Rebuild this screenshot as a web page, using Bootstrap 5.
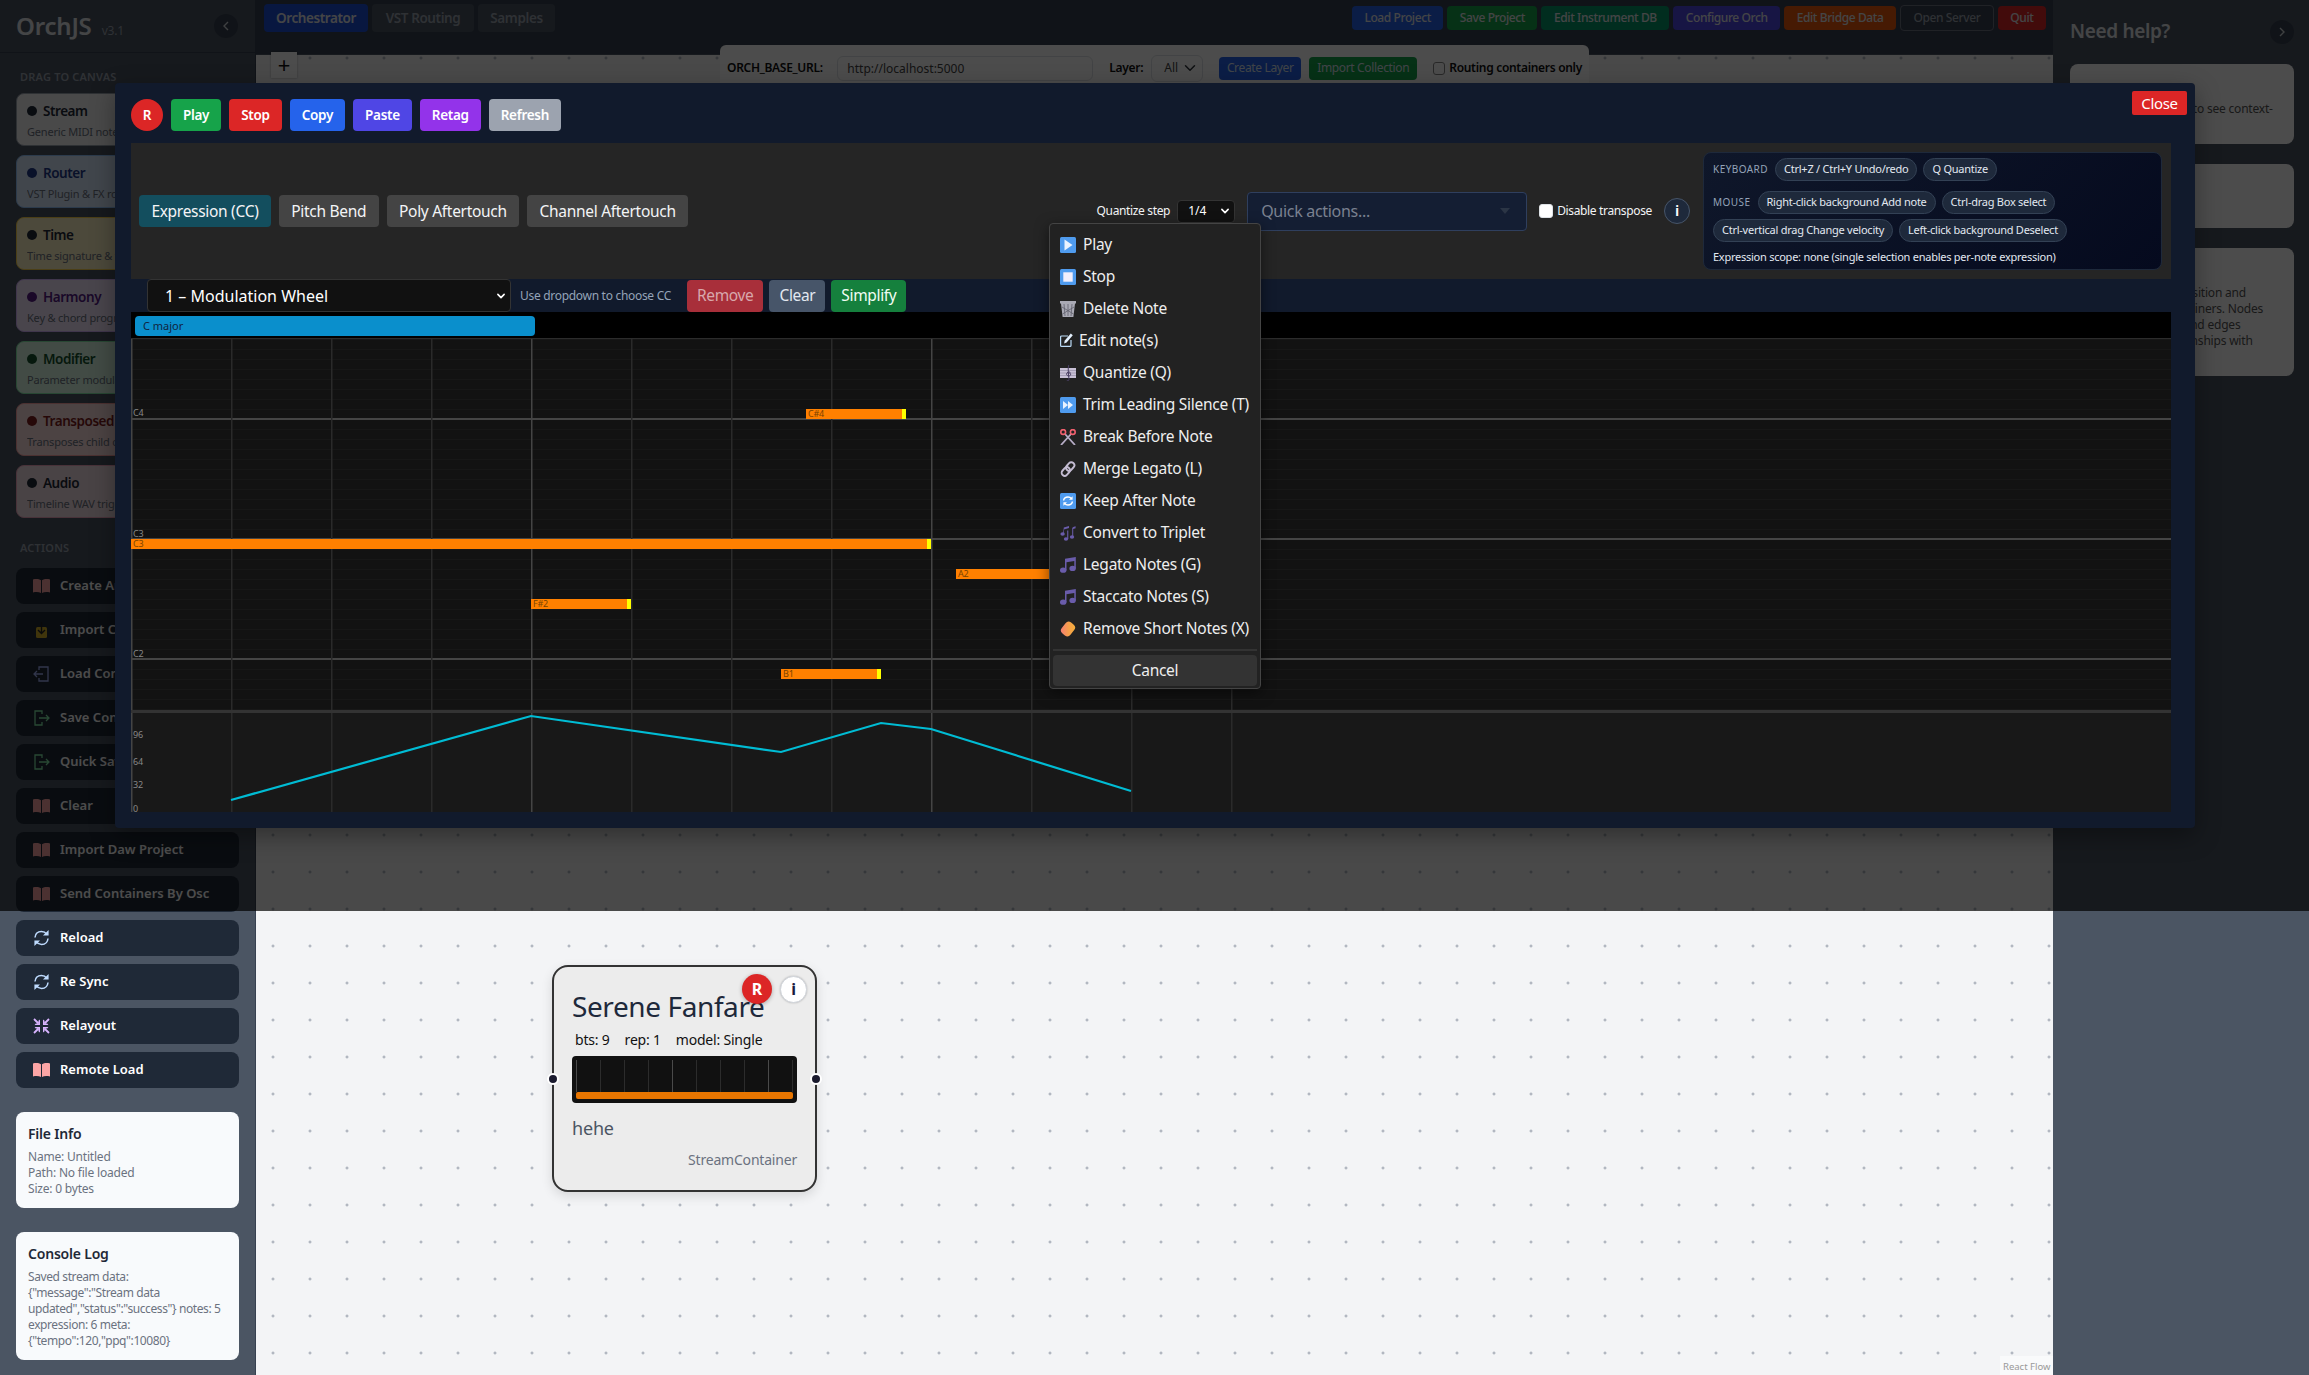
<!DOCTYPE html>
<html lang="en">
<head>
<meta charset="UTF-8">
<meta name="viewport" content="width=device-width, initial-scale=1.0">
<title>OrchJS</title>
<link rel="stylesheet" href="https://cdn.jsdelivr.net/npm/bootstrap@5.3.0/dist/css/bootstrap.min.css">
<style>
html, body { height: 100%; }
body { margin: 0; background: #4b5563; font-family: "Noto Sans", "Liberation Sans", sans-serif; overflow: hidden; letter-spacing: -.2px; }
#app { width: 2309px; height: 1375px; }
.main-col { min-width: 0; }

/* left sidebar */
.side-left { width: 256px; background: #4b5563; border-right: 1px solid #374151; }
.side-head { height: 53px; padding: 0 17px 0 16px; border-bottom: 1px solid #374151; }
.brand { font-size: 24px; font-weight: 600; color: #e5e7eb; line-height: 1; }
.brand small { font-size: 12px; font-weight: 400; color: #9ca3af; margin-left: 4px; }
.round-toggle { width: 24px; height: 24px; border-radius: 50%; background: #374151; }
.side-label { font-size: 11px; font-weight: 600; color: #9ca3af; letter-spacing: .2px; margin: 0 0 0 20px; line-height: 16px; }
.side-label.gap-top { margin-top: 22px; }
.side-body { padding: 8px 16px 0; }
.side-body.acts { padding-top: 12px; }
.pal-item { height: 53px; border-radius: 8px; border: 1px solid; margin-bottom: 9px; padding: 7px 10px; line-height: 1; }
.pal-name { font-size: 13.5px; font-weight: 600; line-height: 20px; display: flex; align-items: center; gap: 6px; letter-spacing: -.45px; }
.pal-name i { width: 10px; height: 10px; border-radius: 50%; background: currentColor; margin-right: 0; }
.pal-desc { font-size: 11px; color: #6b7280; line-height: 16px; white-space: nowrap; margin-top: 3px; overflow: hidden; }
.act-btn { width: 223px; height: 36px; border-radius: 8px; background: #1f2937; color: #fff; font-size: 13px; font-weight: 600; border: 0; padding: 0 0 0 17px; gap: 10px; margin-bottom: 8px; white-space: nowrap; }
.act-btn:hover { background: #1f2937; color: #fff; }
.act-btn svg { width: 17px; height: 16px; flex: none; }
.info-box { width: 223px; background: #f8fafc; border: 0; border-radius: 8px; padding: 12px 12px 10px; margin-left: 16px; }
.info-box.file-box { height: 96px; margin-top: 24px; }
.info-box.log-box { height: 128px; margin-top: 24px; }
.info-box h6 { font-size: 14px; font-weight: 600; color: #1f2937; margin: 0 0 5px; line-height: 20px; }
.info-box p { font-size: 12px; line-height: 16px; color: #6b7280; margin: 0; white-space: nowrap; }
.log-box p { letter-spacing: -.4px; }

/* top bar */
.top-bar { height: 55px; background: #374151; padding: 4px 7px 0 8px; border-bottom: 1px solid #4b5563; }
.tab-btn { height: 28px; padding: 0; border: 0; border-radius: 4px; font-size: 13.5px; font-weight: 600; background: #4b5563; color: #9ca3af; letter-spacing: -.4px; white-space: nowrap; }
.tab-btn.on { background: #1d4ed8; color: #e5e7eb; }
.tab-a { width: 104px; } .tab-b { width: 102px; } .tab-c { width: 77px; }
.mini-btn { height: 24px; padding: 0 12.5px; border: 0; border-radius: 4px; font-size: 12px; font-weight: 500; color: #e5e7eb; line-height: 1; margin-top: 2px; white-space: nowrap; letter-spacing: -.4px; }
.c-blue { background: #2563eb; } .c-green { background: #16a34a; } .c-emerald { background: #059669; }
.c-indigo { background: #4f46e5; } .c-orange { background: #ea580c; } .c-red { background: #dc2626; }
.c-dark { background: #374151; border: 1px solid #6b7280; color: #9ca3af; height: 26px; margin-top: 1px; }

/* canvas */
.flow-canvas { position: relative; background-color: #f3f4f6; background-image: radial-gradient(circle, #9ca3af 1.1px, transparent 1.4px); background-size: 37px 37px; background-position: -1.5px -15.5px; }
.zoom-ctl { position: absolute; left: 15px; top: -3px; width: 26px; height: 26px; background: #fff; color: #111; font-size: 22px; line-height: 24px; text-align: center; box-shadow: 0 0 2px rgba(0,0,0,.3); }
.canvas-tools { position: absolute; left: 464px; top: -10px; width: 869px; height: 46px; background: #fff; border-radius: 6px; padding: 0 7px; font-size: 12px; color: #111; white-space: nowrap; }
.canvas-tools b { font-weight: 600; letter-spacing: -.3px; }
.canvas-tools .form-control { width: 256px; height: 25px; flex: none; font-size: 12px; padding: 0 9px; margin: 0 16px 0 auto; border-radius: 6px; min-height: 0; color: #444; }
.canvas-tools .form-select { width: 52px; height: 27px; flex: none; font-size: 12px; padding: 0 4px 0 12px; margin: 0 16px 0 8px; background-position: right 4px center; min-height: 0; color: #444; }
.canvas-tools .tool-btn { height: 23px; flex: none; padding: 0 8px; font-size: 12px; border: 0; border-radius: 4px; color: #dbe4f0; margin-right: 8px; letter-spacing: -.35px; }
.canvas-tools .tool-btn.wide-lbl { width: 108px; padding: 0; }
.canvas-tools .tool-btn.nar-lbl { width: 82px; padding: 0; }
.canvas-tools .url-lbl { width: 107px; }
.canvas-tools .form-check-input { margin: 0 4px 0 8px; width: 12px; height: 13px; border-color: #888; flex: none; }
.attribution { position: absolute; right: 0; bottom: 0; font-size: 9.5px; padding: 2px 1px 0 3px; line-height: 17px; height: 19px; width: 53px; white-space: nowrap; color: #999; background: rgba(255,255,255,.5); letter-spacing: 0; }

/* node */
.stream-node { position: absolute; left: 296px; top: 910px; width: 265px; height: 227px; background: #ececec; border: 2px solid #333; border-radius: 16px; box-shadow: 0 4px 12px rgba(0,0,0,.12); padding: 21px 18px 0; }
.node-title { font-size: 28px; line-height: 36px; color: #1e293b; white-space: nowrap; letter-spacing: -.4px; }
.node-meta { font-size: 14px; color: #111; margin: 6px 0 7px 3px; gap: 15px; line-height: 19px; }
.node-prev { position: relative; width: 225px; height: 47px; background: #111; border-radius: 4px; overflow: hidden; }
.node-prev span { position: absolute; top: 4px; height: 32px; width: 1px; background: #2c2c2c; }
.node-prev span.hi { background: #4a4a4a; }
.node-prev em { position: absolute; left: 4px; right: 4px; top: 36px; height: 7px; border-radius: 2px; background: #e87500; }
.node-note { font-size: 18px; color: #4b5563; line-height: 26px; margin-top: 12px; }
.node-type { font-size: 14px; color: #6b7280; text-align: right; margin-top: 9px; line-height: 20px; width: 225px; }
.node-r { position: absolute; left: 188px; top: 7px; width: 30px; height: 30px; border-radius: 50%; background: #dc2626; color: #fff; font-weight: 700; font-size: 16px; text-align: center; line-height: 30px; box-shadow: 0 1px 4px rgba(0,0,0,.3); }
.node-i { position: absolute; left: 226px; top: 9px; width: 27px; height: 27px; border-radius: 50%; background: #fff; border: 1px solid #d1d5db; box-shadow: 0 0 2px rgba(0,0,0,.25); color: #1a1a3e; font-weight: 700; font-size: 16px; text-align: center; line-height: 25px; }
.node-hd { position: absolute; top: 106px; width: 12px; height: 12px; border-radius: 50%; background: #1a1a2e; border: 2px solid #fff; }
.node-hd.hd-l { left: -7px; }
.node-hd.hd-r { right: -7px; }

/* right panel */
.side-right { width: 256px; background: #4b5563; padding: 0 15px 0 16px; border-left: 1px solid #4b5563; }
.help-head { height: 64px; color: #e5e7eb; }
.help-head h5 { font-size: 19px; font-weight: 600; margin: -2px 0 0; color: #e5e7eb; letter-spacing: -.35px; }
.help-box { background: #fff; border: 0; border-radius: 8px; padding: 16px 16px 0 16px; margin-bottom: 20px; font-size: 12px; line-height: 16px; color: #555; white-space: nowrap; }
.help-box h6 { font-size: 14px; font-weight: 600; line-height: 17px; color: #1f2937; margin: 0 0 4px; }
.help-box.box-a { height: 80px; }
.help-box.box-b { height: 64px; }
.help-box.box-c { height: 128px; padding-top: 37px; }

/* overlay and editor */
.dim-layer { position: absolute; left: 0; top: 0; width: 2309px; height: 911px; background: rgba(0,0,0,.7); z-index: 10; }
.editor { position: absolute; left: 115px; top: 83px; width: 2080px; height: 745px; background: #111a2c; border-radius: 4px; padding: 16px 24px 16px 16px; color: #fff; box-shadow: 0 8px 24px rgba(0,0,0,.35); }
.ed-btn { height: 32px; padding: 0 12px; border: 0; border-radius: 4px; color: #fff; font-size: 13.5px; font-weight: 600; letter-spacing: -.3px; }
.ed-btn:hover { color: #fff; }
.ed-rec { width: 32px; border-radius: 50%; padding: 0; background: #dc2626; }
.c-purple { background: #9333ea; } .c-gray { background: #9ca3af; } .c-violet { background: #4f46e5; }
.ed-close { position: absolute; left: 2017px; top: 8px; width: 55px; height: 24px; padding: 0; background: #dc2626; border: 0; border-radius: 2px; color: #fff; font-size: 15px; letter-spacing: -.3px; line-height: 1; }
.ed-tools { margin-top: 12px; height: 136px; background: #252525; padding: 0 9px 0 8px; }
.cc-tab { height: 32px; padding: 2px 12.4px 0; border: 0; border-radius: 4px; background: #444; color: #f3f4f6; font-size: 15.5px; font-weight: 400; line-height: 1; letter-spacing: -.3px; white-space: nowrap; }
.cc-tab.on { background: #134e5e; }
.small-lbl { font-size: 12px; color: #f3f4f6; white-space: nowrap; letter-spacing: -.35px; }
.dark-sel { background-color: #111; border: 1px solid #333; color: #fff; border-radius: 4px; background-image: url("data:image/svg+xml,%3csvg xmlns='http://www.w3.org/2000/svg' viewBox='0 0 16 16'%3e%3cpath fill='none' stroke='%23fff' stroke-linecap='round' stroke-linejoin='round' stroke-width='2.6' d='m3 5.5 5 5 5-5'/%3e%3c/svg%3e"); background-size: 10px 10px; background-position: right 4px center; }
.q-sel { width: 58px; height: 23px; font-size: 12px; padding: 0 0 0 10px; margin-left: 7px; min-height: 0; }
.quick-act { width: 280px; height: 39px; margin-left: 12px; background: #141e33; border: 1px solid #2f3f5e; border-radius: 4px; color: #7a8190; font-size: 16px; padding: 0 13px; letter-spacing: -.3px; }
.quick-act u { width: 0; height: 0; border: 5px solid transparent; border-top: 6px solid #2b3545; margin-top: 5px; margin-right: 3px; }
.ed-tools .form-check-input { width: 14px; height: 14px; margin: 0 4px 0 12px; border-radius: 3px; }
.i-badge { width: 26px; height: 26px; border-radius: 50%; background: #1e293b; border: 1px solid #475569; text-align: center; color: #fff; font-weight: 600; font-size: 15px; line-height: 23px; margin: 0 13px 0 12px; }
.key-help { width: 459px; height: 118px; border-radius: 8px; background: linear-gradient(135deg, #0f172a, #050a1e); border: 1px solid #1e293b; padding: 5px 10px 0 9px; font-size: 11px; color: #e2e8f0; letter-spacing: -.25px; }
.key-row { gap: 6px; align-items: center; }
.key-row.row-kbd { margin-bottom: 10px; }
.key-row.row-mouse { margin-bottom: 5px; }
.key-row > b { font-weight: 400; color: #94a3b8; letter-spacing: .45px; font-size: 10px; margin-right: 1px; }
.key-pill { height: 23px; border-radius: 12px; background: #1e293b; border: 1px solid #334155; padding: 0 8px; line-height: 20px; white-space: nowrap; }
.scope-line { margin-top: 7px; }
.cc-row { height: 33px; padding-left: 16px; }
.cc-sel { width: 364px; height: 33px; padding: 0 26px 0 17px; font-size: 16px; margin-right: 9px; }
.cc-hint { font-size: 12px; color: #94a3b8; margin-right: 16px; white-space: nowrap; letter-spacing: -.3px; }
.cc-act { height: 32px; margin-top: 1px; padding: 0 10px; border: 0; border-radius: 4px; font-size: 15.5px; margin-right: 6px; letter-spacing: -.35px; }
.act-remove { background: #a82f3a; color: #d8a8ac; }
.act-clear { background: #475569; color: #e2e8f0; }
.act-simplify { background: #15803d; color: #f0fdf4; }
.chord-lane { height: 27px; background: #000; padding: 4px 4px 3px; border-bottom: 1px solid #2c2c2c; }
.chord-pill { width: 400px; height: 20px; border-radius: 4px; background: #0a8fcc; color: #10243f; font-size: 11px; padding-left: 8px; line-height: 20px; letter-spacing: 0; }
.roll-svg { display: block; background: #121212; }
.lane-svg { display: block; background: #181818; }
.roll-svg text, .lane-svg text { font-family: "Noto Sans", sans-serif; font-size: 9px; }

/* note context menu */
.ctx-menu { position: absolute; left: 934px; top: 140px; width: 212px; height: 466px; background: #222; border: 1px solid #444; border-radius: 4px; padding: 5px 0 0; box-shadow: 0 4px 14px rgba(0,0,0,.5); }
.ctx-item { height: 32px; background: transparent; border: 0; padding: 0 0 0 10px; color: #eee; font-size: 15.5px; gap: 7px; white-space: nowrap; letter-spacing: -.25px; border-radius: 0; }
.ctx-item svg { width: 16px; height: 16px; flex: none; }
.ctx-item.slim { gap: 6px; }
.ctx-item.slim svg { width: 13px; height: 14px; margin-top: -3px; }
.ctx-rule { height: 2px; background: #333; margin: 4px 3px 4px; }
.ctx-cancel { display: block; width: 204px; height: 31px; margin: 0 3px; background: #333; color: #eee; border: 0; border-radius: 4px; font-size: 15.5px; line-height: 1; letter-spacing: -.3px; }
</style>
</head>
<body>
<svg width="0" height="0" class="position-absolute">
  <defs>
    <symbol id="ic-book" viewBox="0 0 17 16"><path fill="#fca5a5" d="M0 1.5C3 .6 6 1 8 2.2V15C6 14 3 13.8 0 14.6ZM17 1.5C14 .6 11 1 9 2.2V15C11 14 14 13.8 17 14.6Z"/></symbol>
    <symbol id="ic-sync" viewBox="0 0 17 16"><g fill="none" stroke="#bfdbfe" stroke-width="1.5"><path d="M2 7.5C2.4 3.5 5 1.6 8.4 1.6c2.4 0 4.2 1 5.4 2.6"/><path d="M15 8.5c-.4 4-3 5.9-6.4 5.9-2.4 0-4.2-1-5.4-2.6"/></g><path fill="#bfdbfe" d="M15.6 0v5.6H10zM1.4 16v-5.6H7z"/></symbol>
    <symbol id="ic-shrink" viewBox="0 0 17 16"><g fill="none" stroke="#d8b4fe" stroke-width="1.8"><path d="M1 1l4.5 4.5M16 1l-4.5 4.5M1 15l4.5-4.5M16 15l-4.5-4.5"/></g><path fill="#d8b4fe" d="M7 7H1.6l1.2-1.6h2.6V2.8L7 1.6zM10 7h5.4l-1.2-1.6h-2.6V2.8L10 1.6zM7 9H1.6l1.2 1.6h2.6v2.6L7 14.4zM10 9h5.4l-1.2 1.6h-2.6v2.6L10 14.4z"/></symbol>
    <symbol id="ic-import" viewBox="0 0 17 16"><rect x="3" y="5" width="11" height="11" rx="1.5" fill="#d6b32a"/><path d="M8.5 0v11M5 8l3.5 3.5L12 8" fill="none" stroke="#222" stroke-width="1.4"/></symbol>
    <symbol id="ic-load" viewBox="0 0 17 16"><path d="M6 4V1h9v14H6v-3M1 8h9M4 5 1 8l3 3" fill="none" stroke="#a5b4fc" stroke-width="1.3"/></symbol>
    <symbol id="ic-save" viewBox="0 0 17 16"><path d="M9 4V1H2v14h7v-3M6 8h10M13 5l3 3-3 3" fill="none" stroke="#86efac" stroke-width="1.3"/></symbol>

    <symbol id="em-play" viewBox="0 0 16 16"><rect width="16" height="16" rx="1.5" fill="#4f9bee"/><path fill="#eaf3ff" d="M4.5 2.5 12.5 8l-8 5.5z"/></symbol>
    <symbol id="em-stop" viewBox="0 0 16 16"><rect width="16" height="16" rx="1.5" fill="#4f9bee"/><rect x="3.3" y="3.3" width="9.4" height="9.4" fill="#f1eefc"/></symbol>
    <symbol id="em-trash" viewBox="0 0 16 16"><path fill="#a9a9b4" d="M0 0h16v2.4H0zM1 2.4h14L13.4 16H2.6z"/><path stroke="#5f5f6c" stroke-width=".8" fill="none" d="M4 3l1 12M8 3v12M12 3l-1 12M2 6l11.5 7M14 6 2.5 13"/></symbol>
    <symbol id="em-edit" viewBox="0 0 13 14"><path d="M8 3H1.6a1 1 0 0 0-1 1v8.400a1 1 0 0 0 1 1h8.400a1 1 0 0 0 1-1V7" fill="none" stroke="#bcdcf8" stroke-width="1.200"/><path d="M4.600 7.800 10.800.6 12.800 2.300 6.600 9.600 4.200 10.400z" fill="#e4f1ff"/></symbol>
    <symbol id="em-score" viewBox="0 0 16 16"><rect y="3" width="16" height="10" fill="#c9c1d6"/><path d="M0 5.500h16M0 8h16M0 10.500h16" stroke="#8d86a0" stroke-width=".6"/><path d="M8.700 0c-1 3-.2 11 .3 14 .2 2-2 2.200-2.200.8M10.400 7.500c-1.400-1.200-3.800-.2-3.800 1.700s3.400 2.500 4 .6-2-2.200-2.600-1" fill="none" stroke="#4a3f63" stroke-width="1"/></symbol>
    <symbol id="em-ff" viewBox="0 0 16 16"><rect width="16" height="16" rx="1.500" fill="#4f9bee"/><path fill="#eaf3ff" d="M3 4l5 4-5 4zM8 4l5 4-5 4z"/></symbol>
    <symbol id="em-scissors" viewBox="0 0 16 16"><path d="M1 16 11 5M15 16 5 5" stroke="#b6acc6" stroke-width="1.800"/><g fill="none" stroke="#f0606e" stroke-width="1.600"><circle cx="3.200" cy="3" r="2.400"/><circle cx="12.800" cy="3" r="2.400"/></g></symbol>
    <symbol id="em-link" viewBox="0 0 16 16"><g fill="none" stroke="#c4bcd2" stroke-width="1.900"><rect x="7.200" y=".8" width="6" height="9.400" rx="3" transform="rotate(42 10.200 5.500)"/><rect x="2.800" y="5.800" width="6" height="9.400" rx="3" transform="rotate(42 5.800 10.500)"/></g></symbol>
    <symbol id="em-keep" viewBox="0 0 16 16"><rect width="16" height="16" rx="1.500" fill="#4f9bee"/><g fill="none" stroke="#fff" stroke-width="1.300"><path d="M3.500 7.500C4 5 6 4 8 4c1.500 0 2.600.5 3.400 1.500"/><path d="M12.500 8.500C12 11 10 12 8 12c-1.500 0-2.600-.5-3.400-1.500"/></g><path fill="#fff" d="M12.600 3.200v3.600H9zM3.400 12.800V9.200H7z"/></symbol>
    <symbol id="em-notes3" viewBox="0 0 16 16"><g fill="#6a5cab"><ellipse cx="2.600" cy="9" rx="2.200" ry="1.800"/><ellipse cx="6" cy="14" rx="2.200" ry="1.800"/><ellipse cx="12" cy="12" rx="2.200" ry="1.800"/><path d="M3.800 2.500 9 1v2l-5 1.600V9h-.9zM7.200 5.500h1.100V14h-1.100zM13.200 2l2.400-.8v2l-2.400.8V12h-1V3z"/></g></symbol>
    <symbol id="em-notes" viewBox="0 0 16 16"><g fill="#6a5cab"><ellipse cx="3.200" cy="13.200" rx="3.200" ry="2.600"/><ellipse cx="12.600" cy="11.400" rx="3.200" ry="2.600"/><path d="M5 1.800 15.800 0v11.400h-1.500V4L6.500 5.300v8H5z"/></g></symbol>
    <symbol id="em-eraser" viewBox="0 0 16 16"><linearGradient id="gr-er" x1="0" y1="1" x2="1" y2="0"><stop offset="0" stop-color="#f57a7a"/><stop offset=".55" stop-color="#f6a04a"/><stop offset="1" stop-color="#f3b13a"/></linearGradient><rect x="2.500" y="1" width="11" height="14" rx="4" transform="rotate(38 8 8)" fill="url(#gr-er)"/></symbol>
  </defs>
</svg>

<div id="app" class="position-relative d-flex">
  <aside class="side-left flex-shrink-0">
    <div class="side-head d-flex align-items-center justify-content-between">
      <div class="brand">OrchJS <small>v3.1</small></div>
      <div class="round-toggle d-flex align-items-center justify-content-center"><svg width="8" height="12" viewBox="0 0 8 12"><path d="M6 2 2 6l4 4" fill="none" stroke="#d1d5db" stroke-width="1.4"/></svg></div>
    </div>
    <div class="pt-3">
      <p class="side-label">DRAG TO CANVAS</p>
    </div>
    <div class="side-body" id="palette"></div>
    <p class="side-label gap-top">ACTIONS</p>
    <div class="side-body acts" id="actions"></div>
    <div class="info-box card file-box">
      <h6>File Info</h6>
      <p>Name: Untitled<br>Path: No file loaded<br>Size: 0 bytes</p>
    </div>
    <div class="info-box card log-box">
      <h6>Console Log</h6>
      <p>Saved stream data:<br>{"message":"Stream data<br>updated","status":"success"} notes: 5<br>expression: 6 meta:<br>{"tempo":120,"ppq":10080}</p>
    </div>
  </aside>

  <main class="main-col d-flex flex-column flex-grow-1">
    <div class="top-bar d-flex flex-shrink-0">
      <div class="d-flex gap-1">
        <button class="btn tab-btn tab-a on">Orchestrator</button>
        <button class="btn tab-btn tab-b">VST Routing</button>
        <button class="btn tab-btn tab-c">Samples</button>
      </div>
      <div class="d-flex gap-1 ms-auto">
        <button class="btn mini-btn c-blue">Load Project</button>
        <button class="btn mini-btn c-green">Save Project</button>
        <button class="btn mini-btn c-emerald">Edit Instrument DB</button>
        <button class="btn mini-btn c-indigo">Configure Orch</button>
        <button class="btn mini-btn c-orange">Edit Bridge Data</button>
        <button class="btn mini-btn c-dark">Open Server</button>
        <button class="btn mini-btn c-red">Quit</button>
      </div>
    </div>
    <div class="flow-canvas flex-grow-1">
      <div class="zoom-ctl">+</div>
      <div class="canvas-tools d-flex align-items-center">
        <b class="url-lbl">ORCH_BASE_URL:</b>
        <input class="form-control" value="http://localhost:5000">
        <b>Layer:</b>
        <select class="form-select"><option>All</option></select>
        <button class="btn tool-btn nar-lbl c-blue">Create Layer</button>
        <button class="btn tool-btn wide-lbl c-green">Import Collection</button>
        <input class="form-check-input" type="checkbox">
        <b>Routing containers only</b>
      </div>

      <div class="stream-node">
        <div class="node-title">Serene Fanfare</div>
        <div class="node-meta d-flex"><span>bts: 9</span><span>rep: 1</span><span>model: Single</span></div>
        <div class="node-prev" id="nodePrev"><em></em></div>
        <div class="node-note">hehe</div>
        <div class="node-type">StreamContainer</div>
        <div class="node-r">R</div>
        <div class="node-i">i</div>
        <div class="node-hd hd-l"></div>
        <div class="node-hd hd-r"></div>
      </div>
      <div class="attribution">React Flow</div>
    </div>
  </main>

  <aside class="side-right flex-shrink-0">
    <div class="help-head d-flex align-items-center justify-content-between">
      <h5>Need help?</h5>
      <div class="round-toggle d-flex align-items-center justify-content-center"><svg width="8" height="12" viewBox="0 0 8 12"><path d="m2 2 4 4-4 4" fill="none" stroke="#d1d5db" stroke-width="1.4"/></svg></div>
    </div>
    <div class="help-box card box-a"><h6>Helpful Info</h6><div>Hover over an item to see context-</div></div>
    <div class="help-box card box-b"></div>
    <div class="help-box card box-c">
      <div>Manage the composition and</div><div>organize your containers. Nodes</div><div>represent objects and edges</div><div>describe the relationships with</div>
    </div>
  </aside>

  <div class="dim-layer">
    <div class="editor">
      <div class="d-flex gap-2">
        <button class="btn ed-btn ed-rec">R</button>
        <button class="btn ed-btn c-green">Play</button>
        <button class="btn ed-btn c-red">Stop</button>
        <button class="btn ed-btn c-blue">Copy</button>
        <button class="btn ed-btn c-violet">Paste</button>
        <button class="btn ed-btn c-purple">Retag</button>
        <button class="btn ed-btn c-gray">Refresh</button>
      </div>
      <button class="btn ed-close">Close</button>

      <div class="ed-tools d-flex align-items-center justify-content-between">
        <div class="d-flex gap-2">
          <button class="btn cc-tab on">Expression (CC)</button>
          <button class="btn cc-tab">Pitch Bend</button>
          <button class="btn cc-tab">Poly Aftertouch</button>
          <button class="btn cc-tab">Channel Aftertouch</button>
        </div>
        <div class="d-flex align-items-center">
          <span class="small-lbl">Quantize step</span>
          <select class="form-select dark-sel q-sel"><option>1/4</option></select>
          <div class="quick-act d-flex align-items-center justify-content-between"><span>Quick actions...</span><u></u></div>
          <input class="form-check-input" type="checkbox">
          <span class="small-lbl">Disable transpose</span>
          <div class="i-badge">i</div>
          <div class="key-help">
            <div class="key-row row-kbd d-flex"><b>KEYBOARD</b><span class="key-pill">Ctrl+Z / Ctrl+Y Undo/redo</span><span class="key-pill">Q Quantize</span></div>
            <div class="key-row row-mouse d-flex"><b>MOUSE</b><span class="key-pill">Right-click background Add note</span><span class="key-pill">Ctrl-drag Box select</span></div>
            <div class="key-row d-flex"><span class="key-pill">Ctrl-vertical drag Change velocity</span><span class="key-pill">Left-click background Deselect</span></div>
            <div class="scope-line">Expression scope: none (single selection enables per-note expression)</div>
          </div>
        </div>
      </div>

      <div class="cc-row d-flex">
        <select class="form-select dark-sel cc-sel"><option>1 – Modulation Wheel</option></select>
        <span class="cc-hint align-self-center">Use dropdown to choose CC</span>
        <button class="btn cc-act act-remove">Remove</button>
        <button class="btn cc-act act-clear">Clear</button>
        <button class="btn cc-act act-simplify">Simplify</button>
      </div>

      <div class="chord-lane"><div class="chord-pill">C major</div></div>
      <svg class="roll-svg" id="roll" width="2040" height="372"></svg>
      <svg class="lane-svg" id="lane" width="2040" height="101"></svg>

      <div class="ctx-menu">
        <div class="list-group" id="ctxList"></div>
        <div class="ctx-rule"></div>
        <button class="btn ctx-cancel">Cancel</button>
      </div>
    </div>
  </div>
</div>

<script src="https://cdn.jsdelivr.net/npm/bootstrap@5.3.0/dist/js/bootstrap.bundle.min.js"></script>
<script>
    const NS = "http://www.w3.org/2000/svg";

    // Sidebar palette
    const paletteItems = [
        ["Stream", "Generic MIDI notes", "#f3f4f6", "#9ca3af", "#1f2937"],
        ["Router", "VST Plugin & FX routing", "#dbeafe", "#93c5fd", "#1e3a8a"],
        ["Time", "Time signature & tempo", "#fef3c7", "#fcd34d", "#1f2937"],
        ["Harmony", "Key & chord progression", "#f3e8ff", "#d8b4fe", "#581c87"],
        ["Modifier", "Parameter modulation", "#dcfce7", "#86efac", "#14532d"],
        ["Transposed", "Transposes child containers", "#fee2e2", "#fca5a5", "#7f1d1d"],
        ["Audio", "Timeline WAV triggers", "#f5e1e6", "#f0a8c0", "#1f2937"]
    ];
    document.getElementById("palette").innerHTML = paletteItems.map(p =>
        `<div class="pal-item" style="background:${p[2]};border-color:${p[3]};color:${p[4]}">
            <div class="pal-name"><i></i>${p[0]}</div>
            <div class="pal-desc">${p[1]}</div>
        </div>`).join("");

    // Sidebar actions
    const actionItems = [
        ["ic-book", "Create Arrangement"], ["ic-import", "Import Collection"], ["ic-load", "Load Config"],
        ["ic-save", "Save Config"], ["ic-save", "Quick Save"], ["ic-book", "Clear"],
        ["ic-book", "Import Daw Project"], ["ic-book", "Send Containers By Osc"],
        ["ic-sync", "Reload"], ["ic-sync", "Re Sync"], ["ic-shrink", "Relayout"], ["ic-book", "Remote Load"]
    ];
    document.getElementById("actions").innerHTML = actionItems.map(a =>
        `<button class="btn act-btn d-flex align-items-center"><svg><use href="#${a[0]}"/></svg>${a[1]}</button>`).join("");

    // Context menu
    const menuItems = [
        ["em-play", "Play"], ["em-stop", "Stop"], ["em-trash", "Delete Note"], ["em-edit", "Edit note(s)", 1],
        ["em-score", "Quantize (Q)"], ["em-ff", "Trim Leading Silence (T)"], ["em-scissors", "Break Before Note"],
        ["em-link", "Merge Legato (L)"], ["em-keep", "Keep After Note"], ["em-notes3", "Convert to Triplet"],
        ["em-notes", "Legato Notes (G)"], ["em-notes", "Staccato Notes (S)"], ["em-eraser", "Remove Short Notes (X)"]
    ];
    document.getElementById("ctxList").innerHTML = menuItems.map(m =>
        `<div class="ctx-item d-flex align-items-center${m[2] ? " slim" : ""}"><svg><use href="#${m[0]}"/></svg>${m[1]}</div>`).join("");

    // Small preview in the node
    const prev = document.getElementById("nodePrev");
    for (let i = 0; i < 10; i++) {
        const s = document.createElement("span");
        s.style.left = (4 + i * 24) + "px";
        if (i % 4 === 0) s.className = "hi";
        prev.appendChild(s);
    }

    function add(svg, tag, attrs, txt) {
        const el = document.createElementNS(NS, tag);
        for (const k in attrs) el.setAttribute(k, attrs[k]);
        if (txt) el.textContent = txt;
        svg.appendChild(el);
    }

    // Piano roll: origin is x=131, y=339 on the page
    const roll = document.getElementById("roll");
    const lane = document.getElementById("lane");
    for (let y = 0; y < 372; y += 10) {
        add(roll, "rect", { x: 0, y: y, width: 2040, height: 1, fill: "#171717" });
    }
    [79, 199, 319].forEach(y => add(roll, "rect", { x: 0, y: y, width: 2040, height: 2, fill: "#444" }));
    for (let i = 0; i <= 11; i++) {
        const strong = i % 4 === 0;
        const x = i * 100;
        add(roll, "rect", { x: x, y: 0, width: 1.5, height: 372, fill: strong ? "#444" : "#2a2a2a" });
        add(lane, "rect", { x: x, y: 0, width: 1.5, height: 101, fill: strong ? "#444" : "#2a2a2a" });
    }
    [["C4", 74], ["C3", 195], ["C2", 315]].forEach(l =>
        add(roll, "text", { x: 2, y: l[1] + 3, fill: "#888" }, l[0]));

    const notes = [
        ["C3", 0, 200, 800], ["C#4", 675, 70, 100], ["F#2", 400, 260, 100],
        ["A2", 825, 230, 100], ["B1", 650, 330, 100]
    ];
    notes.forEach(n => {
        add(roll, "rect", { x: n[1], y: n[2], width: n[3], height: 10, fill: "#ff8000" });
        add(roll, "rect", { x: n[1] + n[3] - 4, y: n[2], width: 4, height: 10, fill: "#ffff00" });
        add(roll, "text", { x: n[1] + 2, y: n[2] + 8, fill: "#7a4300" }, n[0]);
    });
    add(roll, "rect", { x: 0, y: 371, width: 2040, height: 1, fill: "#333" });

    // Expression lane: origin is x=131, y=711 on the page
    add(lane, "rect", { x: 0, y: 0, width: 2040, height: 2, fill: "#333" });
    [["96", 27], ["64", 54], ["32", 77], ["0", 101]].forEach(l =>
        add(lane, "text", { x: 2, y: l[1], fill: "#888" }, l[0]));
    add(lane, "polyline", { points: "100,89 400,5 650,41 750,12 800,18 1000,80", fill: "none", stroke: "#00bcd4", "stroke-width": 2.2 });
</script>
</body>
</html>
